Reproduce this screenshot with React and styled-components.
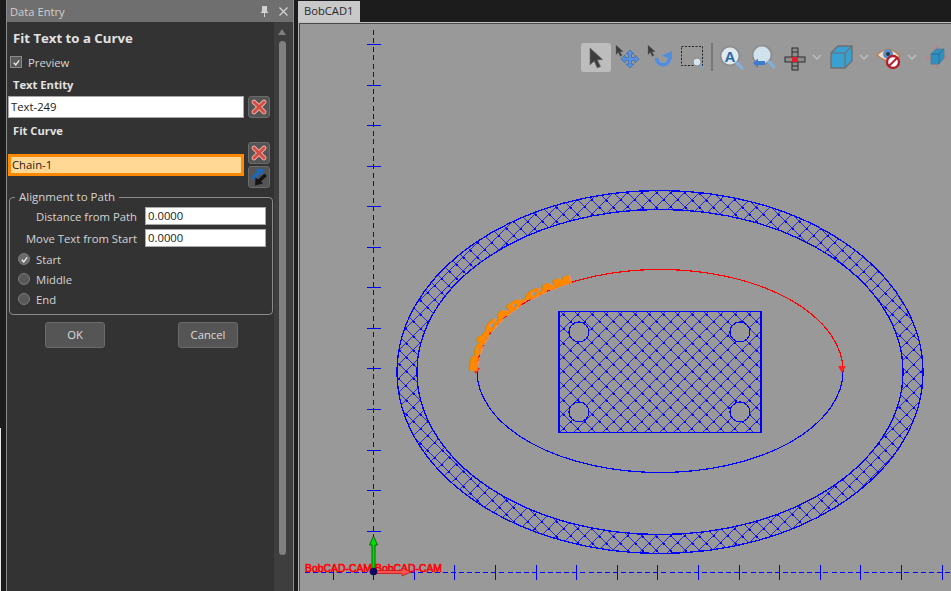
import React from 'react';
import styled, { createGlobalStyle } from 'styled-components';

const UI_FONT = '"Open Sans", "Noto Sans", "Liberation Sans", sans-serif';

const GlobalStyle = createGlobalStyle`
  html, body {
    margin: 0;
    padding: 0;
    background: #1c1c1c;
    overflow: hidden;
  }
  * {
    box-sizing: border-box;
  }
`;

const Window = styled.div`
  display: flex;
  width: 951px;
  height: 591px;
  background: #1c1c1c;
  font-family: ${UI_FONT};
  font-size: 11.3px;
  overflow: hidden;
`;

const LeftEdge = styled.div`
  width: 6px;
  background: linear-gradient(to right, #e8e8e8 0 1.5px, #1c1c1c 1.5px);
  background-size: 100% 163px;
  background-position: 0 428px;
  background-repeat: no-repeat;
`;

/* docked panel */
const Panel = styled.div`
  display: flex;
  flex-direction: column;
  width: 288px;
  height: 591px;
  border-left: 1px solid #8c8c8c;
  border-right: 1px solid #8c8c8c;
  background: #333333;
`;

const TitleBar = styled.div`
  display: flex;
  align-items: center;
  height: 22px;
  padding: 0 5px 0 3px;
  background: #6f6f6f;
  color: #cfcfcf;
  font-size: 11.2px;
`;

const TitleText = styled.span`
  flex: 1;
`;

const TitleIcon = styled.svg`
  display: block;
  margin-left: 10px;
`;

const PanelBody = styled.div`
  display: flex;
  flex: 1;
`;

const Form = styled.div`
  flex: 1;
  padding-top: 8px;
`;

const Scrollbar = styled.div`
  position: relative;
  width: 19px;
  background: #3e3e3e;
`;

const ScrollArrow = styled.div`
  position: absolute;
  left: 4px;
  top: 7px;
  width: 0;
  height: 0;
  border-left: 4px solid transparent;
  border-right: 4px solid transparent;
  border-bottom: 6px solid #808080;
`;

const ScrollThumb = styled.div`
  position: absolute;
  left: 5px;
  top: 19px;
  width: 7px;
  height: 514px;
  border-radius: 4px;
  background: #808080;
`;

const Heading = styled.div`
  height: ${p => p.$h}px;
  margin-top: ${p => p.$top || 0}px;
  padding-left: 6px;
  color: #e2e2e2;
  font-size: ${p => p.$size || 11.2}px;
  font-weight: 700;
  line-height: ${p => p.$h - 2}px;
`;

const CheckRow = styled.div`
  display: flex;
  align-items: center;
  height: 18px;
  margin: 5px 0 5px 3px;
  color: #d4d4d4;
`;

const CheckBox = styled.span`
  display: flex;
  align-items: center;
  justify-content: center;
  width: 12px;
  height: 12px;
  margin-right: 6px;
  border: 1px solid #8a8a8a;
  background: #5a5a5a;
`;

const EntityRow = styled.div`
  display: flex;
  align-items: flex-start;
  gap: 4px;
  margin-left: 1px;
`;

const TextField = styled.div`
  width: ${p => p.$w}px;
  height: 22px;
  padding-left: 2px;
  border: 1px solid #a8a8a8;
  background: #ffffff;
  color: #1c1c1c;
  line-height: 20px;
`;

const ActiveField = styled(TextField)`
  margin-top: 12px;
  padding-left: 1px;
  border: 3px solid #ff8a00;
  background: #ffd896;
  line-height: 16px;
`;

const ButtonStack = styled.div`
  display: flex;
  flex-direction: column;
  gap: 2px;
`;

const IconButton = styled.div`
  display: flex;
  align-items: center;
  justify-content: center;
  width: 22px;
  height: 22px;
  border: 1px solid #6a6a6a;
  border-radius: 3px;
  background: #555555;
`;

const AlignGroup = styled.fieldset`
  width: 264px;
  height: 125px;
  margin: 2px 0 0 2px;
  padding: 3px 6px 0 8px;
  border: 1px solid #8a8a8a;
  border-radius: 4px;
  color: #d4d4d4;
`;

const GroupLegend = styled.legend`
  margin-left: -3px;
  padding: 0 4px;
  font-size: 11.5px;
  line-height: 14px;
`;

const ValueRow = styled.div`
  display: flex;
  align-items: center;
  justify-content: flex-end;
  gap: 8px;
  height: 18px;

  & + & {
    margin-top: 4px;
  }
`;

const ValueField = styled.div`
  width: 121px;
  height: 18px;
  padding-left: 2px;
  border: 1px solid #a8a8a8;
  background: #ffffff;
  color: #1c1c1c;
  line-height: 16px;
`;

const RadioList = styled.div`
  margin-top: 2px;
`;

const RadioRow = styled.div`
  display: flex;
  align-items: center;
  gap: 6px;
  height: 20px;
`;

const Radio = styled.span`
  display: flex;
  align-items: center;
  justify-content: center;
  width: 12px;
  height: 12px;
  border: 1px solid #7c7c7c;
  border-radius: 50%;
  background: ${p => (p.$on ? '#6a6a6a' : '#585858')};
`;

const Actions = styled.div`
  display: flex;
  justify-content: space-between;
  width: 193px;
  margin: 7px 0 0 38px;
`;

const PushButton = styled.div`
  width: 60px;
  height: 26px;
  border: 1px solid #6a6a6a;
  border-radius: 3px;
  background: #555555;
  color: #dcdcdc;
  line-height: 24px;
  text-align: center;
`;

/* document area */
const DocArea = styled.div`
  display: flex;
  flex: 1;
  flex-direction: column;
  margin-left: 4px;
`;

const TabBar = styled.div`
  display: flex;
  height: 22px;
  padding-top: 1px;
  background: #1c1c1c;
`;

const Tab = styled.div`
  width: 62px;
  height: 21px;
  padding-left: 6px;
  background: #c9c9c9;
  color: #2a2a2a;
  font-size: 11.2px;
  line-height: 20px;
`;

const View = styled.div`
  position: relative;
  flex: 1;
  border-top: 1px solid #c0c0c0;
  border-left: 1px solid #b4b4b4;
  box-shadow: inset 1px 1px 0 #4a4a4a;
  background: #999999;
  overflow: hidden;
`;

const Canvas = styled.svg`
  display: block;
  position: absolute;
  left: 2px;
  top: 1px;
`;

const Toolbar = styled.div`
  position: absolute;
  left: 282px;
  top: 20px;
  display: flex;
  height: 29px;
`;

const ToolSlot = styled.div`
  flex: none;
  width: ${p => p.$w}px;
  height: 29px;
  border-radius: 3px;
  background: ${p => (p.$active ? '#bdbdbd' : 'transparent')};
`;

const ToolSvg = styled.svg`
  display: block;
`;

const RemoveIcon = () => (
  <svg width="16" height="16" viewBox="0 0 16 16">
    <path d="M3 3 L13 13 M13 3 L3 13" stroke="#efb5ae" strokeWidth="4.6" strokeLinecap="round" />
    <path d="M3 3 L13 13 M13 3 L3 13" stroke="#d24d43" strokeWidth="3" strokeLinecap="round" />
  </svg>
);

const SwapIcon = () => (
  <svg width="20" height="20" viewBox="0 0 20 20">
    <path d="M2 10 L8 5 L6.5 2.5 L14.5 1.5 L13 9 L11 7 L5 13 Z" fill="#1d67b4" />
    <path d="M18 9 L12 14.5 L14 16.5 L6 18.5 L6.5 10.5 L9 12.5 L15.5 6.5 Z" fill="#141414" />
  </svg>
);

const Tick = ({ color = '#e8e8e8', size = 10 }) => (
  <svg width={size} height={size} viewBox="0 0 10 10">
    <path d="M2 5.2 L4.2 7.6 L8 2.6" fill="none" stroke={color} strokeWidth="1.6" />
  </svg>
);

const Slot = ({ w, active, children }) => (
  <ToolSlot $w={w} $active={active}>
    <ToolSvg width={w} height="29" viewBox={`0 0 ${w} 29`}>{children}</ToolSvg>
  </ToolSlot>
);

const Pointer = ({ x, y, s = 1 }) => (
  <path
    transform={`translate(${x} ${y}) scale(${s})`}
    d="M0 0 L0 16 L4 12.5 L7 19 L10 17.5 L7 11.5 L12 11 Z"
    fill="#3d3d3d"
    stroke="#6a6a6a"
    strokeWidth="0.7"
  />
);

const Chevron = () => (
  <Slot w={12}>
    <path d="M2 12 L6 16 L10 12" fill="none" stroke="#bdbdbd" strokeWidth="1.4" />
  </Slot>
);

const ToolIcons = () => (
  <Toolbar>
    <Slot w={30} active><Pointer x={9} y={5} s={1.05} /></Slot>
    <Slot w={34}>
      <Pointer x={5} y={2} s={0.6} />
      <path
        d="M19 7 L23 11 L20.5 11 L20.5 14.5 L24 14.5 L24 12 L28 16 L24 20 L24 17.5 L20.5 17.5 L20.5 21 L23 21 L19 25 L15 21 L17.5 21 L17.5 17.5 L14 17.5 L14 20 L10 16 L14 12 L14 14.5 L17.5 14.5 L17.5 11 L15 11 Z"
        fill="#5a90e2"
        stroke="#3a68a8"
        strokeWidth="0.7"
      />
    </Slot>
    <Slot w={32}>
      <Pointer x={3} y={2} s={0.6} />
      <path d="M11.5 15 A6.5 6.5 0 1 0 24.5 15.5" fill="none" stroke="#4f8ee0" strokeWidth="3.5" />
      <path d="M17 12.5 L27 8 L27 17 Z" fill="#4f8ee0" />
    </Slot>
    <Slot w={32}>
      <rect x="4.5" y="3.5" width="21" height="19" fill="none" stroke="#222" strokeDasharray="2 1.5" />
      <circle cx="20" cy="19" r="4" fill="#d6e6f0" stroke="#8b8b8b" />
      <path d="M23 22 L26 25" stroke="#7fa6cc" strokeWidth="2" />
    </Slot>
    <Slot w={6}>
      <rect x="2" y="0" width="2" height="28" fill="#777" />
    </Slot>
    <Slot w={32}>
      <circle cx="15" cy="13" r="9.5" fill="#dfe9f0" stroke="#8f8f8f" strokeWidth="2" />
      <text x="15" y="18.5" textAnchor="middle" fontFamily="Liberation Sans" fontWeight="700" fontSize="15" fill="#2a68ab">A</text>
      <path d="M22 20 L27 25" stroke="#86aed4" strokeWidth="3.4" strokeLinecap="round" />
    </Slot>
    <Slot w={32}>
      <circle cx="15" cy="12" r="9.5" fill="#cfe2ee" stroke="#8f8f8f" strokeWidth="2" />
      <path d="M6 20 L11 15.5 L11 18 L18 18 L18 22 L11 22 L11 25 Z" fill="#3d7cd0" />
      <path d="M22 19 L27 24" stroke="#86aed4" strokeWidth="3.4" strokeLinecap="round" />
    </Slot>
    <Slot w={32}>
      <rect x="13" y="5" width="6" height="22" fill="#8d8d8d" stroke="#2d2d2d" />
      <path d="M13 9 H19 M13 23 H19" stroke="#2d2d2d" />
      <rect x="6" y="14" width="20" height="5" fill="#8d8d8d" stroke="#2d2d2d" />
      <rect x="13" y="14" width="6" height="5" fill="#e0202a" />
    </Slot>
    <Chevron />
    <Slot w={35}>
      <path d="M8 10 L15 3 L29 3 L29 18 L22 25 L8 25 Z" fill="#39a1d2" stroke="#6f6f6f" strokeWidth="1.4" />
      <path d="M8 10 L22 10 L29 3 M22 10 L22 25" fill="none" stroke="#6f6f6f" strokeWidth="1.2" />
    </Slot>
    <Chevron />
    <Slot w={36}>
      <path d="M7 12 Q18 0 30 13 Q18 23 7 12 Z" fill="#e9dfd0" stroke="#b5835a" strokeWidth="1.6" />
      <circle cx="18" cy="11" r="5" fill="#5b8ec2" />
      <circle cx="18" cy="11" r="2" fill="#22364d" />
      <circle cx="23" cy="19" r="6" fill="#fff" stroke="#b3202c" strokeWidth="2.4" />
      <path d="M19 23 L27 15" stroke="#b3202c" strokeWidth="2" />
    </Slot>
    <Chevron />
    <Slot w={33}>
      <path d="M8 15 L29 15 M19 3 L19 25" stroke="#e46a6a" strokeWidth="1" />
      <path d="M13 11 L18 6 L26 6 L26 15 L21 21 L13 21 Z" fill="#2f8fc0" stroke="#5a7f96" />
      <path d="M13 11 L21 11 L26 6 M21 11 L21 21" fill="none" stroke="#2a6f96" />
    </Slot>
  </Toolbar>
);

/* drawing geometry, in page coordinates */
const CX = 660;
const CY = 372;
const TICK = 40.6;
const HATCH = 14.3;
const HOLES = [[579, 332], [740, 332], [579, 412], [740, 412]];

const ellipsePath = (rx, ry, cy = CY) =>
  `M${CX - rx} ${cy} A${rx} ${ry} 0 1 0 ${CX + rx} ${cy} A${rx} ${ry} 0 1 0 ${CX - rx} ${cy} Z`;

const circlePath = (x, y, r) => `M${x - r} ${y} A${r} ${r} 0 1 0 ${x + r} ${y} A${r} ${r} 0 1 0 ${x - r} ${y} Z`;

const hatchValues = base => Array.from({ length: 81 }, (_, i) => Math.round(base + (i - 40) * HATCH));

const hatchLines = () => {
  const lines = [];
  hatchValues(963).forEach(a => lines.push(`M${a - 150} 150 L${a - 620} 620`));
  hatchValues(249).forEach(b => lines.push(`M${b + 150} 150 L${b + 620} 620`));
  return lines.join(' ');
};

// the screen hatch leaves a small blob wherever two lines cross
const hatchDots = () => {
  const dots = [];
  hatchValues(963).forEach(a => {
    hatchValues(249).forEach(b => {
      const x = Math.floor((a + b) / 2);
      const y = Math.floor((a - b) / 2);
      if (x > 390 && x < 930 && y > 185 && y < 560) {
        dots.push(`M${x} ${y} h2 v2 h-2 z`);
      }
    });
  });
  return dots.join(' ');
};

const range = (from, step, count) => Array.from({ length: count }, (_, i) => from + i * step);

const Drawing = () => (
  <Canvas width="650" height="567" viewBox="301 24 650 567">
    <defs>
      <clipPath id="hatchArea">
        <path
          clipRule="evenodd"
          d={`${ellipsePath(263, 181.5)} ${ellipsePath(243, 162.5)} M559 311 H761 V432 H559 Z ${HOLES.map(h => circlePath(h[0], h[1], 10)).join(' ')}`}
        />
      </clipPath>
    </defs>

    <g shapeRendering="crispEdges" fill="none" stroke="#0000ff">
      <path d={hatchLines()} clipPath="url(#hatchArea)" strokeWidth="0.75" />
      <path d={hatchDots()} clipPath="url(#hatchArea)" fill="#0000ff" stroke="none" />
      <path d={ellipsePath(263, 181.5)} strokeWidth="1.3" />
      <path d={ellipsePath(243, 162.5)} strokeWidth="1.3" />
      <rect x="559" y="311.5" width="202" height="121" strokeWidth="1.3" />
      {HOLES.map(h => <circle key={h[0] + '-' + h[1]} cx={h[0]} cy={h[1]} r="10" strokeWidth="1.1" />)}
      <path d="M477 371 A183 101.5 0 0 0 843 371" strokeWidth="1.2" />
      <path d="M477 371 A183 101.5 0 0 1 843 371" stroke="#ff0000" strokeWidth="1.2" />

      <path d="M373.5 30 V575" strokeDasharray="5 3.4" />
      <path d="M305 572.5 H951" strokeDasharray="5 3.1" />
      {range(44.5, 40.55, 13).map(y => <path key={y} d={`M366.5 ${y} H380.5`} />)}
      {range(333, TICK, 16).map(x => <path key={x} d={`M${x} 565 V580`} />)}
    </g>

    <path d="M472 368 L480 368 L476 374 Z M838 366 L846 366 L842 373 Z" fill="#ff2020" />

    <path id="fitCurve" d="M477 371 A183 101.5 0 0 1 573 282" fill="none" />
    <text fontFamily="Liberation Sans" fontSize="10" fontWeight="700" fill="#ff8800" stroke="#ff8800" strokeWidth="1.6">
      <textPath href="#fitCurve" textLength="138" lengthAdjust="spacingAndGlyphs">BobCAD-CAM</textPath>
    </text>

    <text x="305" y="572" fontFamily="Liberation Sans" fontSize="11" fill="#ff0000" stroke="#ff0000" strokeWidth="0.6" textLength="67" lengthAdjust="spacingAndGlyphs">BobCAD-CAM</text>
    <text x="375" y="572" fontFamily="Liberation Sans" fontSize="11" fill="#ff0000" stroke="#ff0000" strokeWidth="0.6" textLength="67" lengthAdjust="spacingAndGlyphs">BobCAD-CAM</text>

    <path d="M376 570.5 H402 V568 L411 572 L402 576 V573.5 H376 Z" fill="#ff5050" stroke="#c01818" strokeWidth="0.8" />
    <path d="M372 571 V545 H369.5 L373.5 536 L377.5 545 H375 V571 Z" fill="#00e000" stroke="#064d06" strokeWidth="0.8" />
    <circle cx="373.5" cy="571.5" r="3.8" fill="#0a0a60" />
  </Canvas>
);

export default function App() {
  return (
    <>
      <GlobalStyle />
      <Window>
        <LeftEdge />
        <Panel>
          <TitleBar>
            <TitleText>Data Entry</TitleText>
            <TitleIcon width="9" height="11" viewBox="0 0 9 11">
              <path d="M2 0 H7 V5 L8.5 7 H0.5 L2 5 Z M4 7 H5 V11 H4 Z" fill="#d0d0d0" />
            </TitleIcon>
            <TitleIcon width="9" height="9" viewBox="0 0 9 9">
              <path d="M0.5 0.5 L8.5 8.5 M8.5 0.5 L0.5 8.5" stroke="#d8d8d8" strokeWidth="1.1" />
            </TitleIcon>
          </TitleBar>
          <PanelBody>
            <Form>
              <Heading $h={18} $size={13.2}>Fit Text to a Curve</Heading>
              <CheckRow>
                <CheckBox><Tick size={9} /></CheckBox>
                Preview
              </CheckRow>
              <Heading $h={20}>Text Entity</Heading>
              <EntityRow>
                <TextField $w={236}>Text-249</TextField>
                <IconButton><RemoveIcon /></IconButton>
              </EntityRow>
              <Heading $h={20} $top={4}>Fit Curve</Heading>
              <EntityRow>
                <ActiveField $w={236}>Chain-1</ActiveField>
                <ButtonStack>
                  <IconButton><RemoveIcon /></IconButton>
                  <IconButton><SwapIcon /></IconButton>
                </ButtonStack>
              </EntityRow>
              <AlignGroup>
                <GroupLegend>Alignment to Path</GroupLegend>
                <ValueRow>Distance from Path<ValueField>0.0000</ValueField></ValueRow>
                <ValueRow>Move Text from Start<ValueField>0.0000</ValueField></ValueRow>
                <RadioList>
                  <RadioRow><Radio $on><Tick size={9} /></Radio>Start</RadioRow>
                  <RadioRow><Radio />Middle</RadioRow>
                  <RadioRow><Radio />End</RadioRow>
                </RadioList>
              </AlignGroup>
              <Actions>
                <PushButton>OK</PushButton>
                <PushButton>Cancel</PushButton>
              </Actions>
            </Form>
            <Scrollbar>
              <ScrollArrow />
              <ScrollThumb />
            </Scrollbar>
          </PanelBody>
        </Panel>
        <DocArea>
          <TabBar><Tab>BobCAD1</Tab></TabBar>
          <View>
            <Drawing />
            <ToolIcons />
          </View>
        </DocArea>
      </Window>
    </>
  );
}
